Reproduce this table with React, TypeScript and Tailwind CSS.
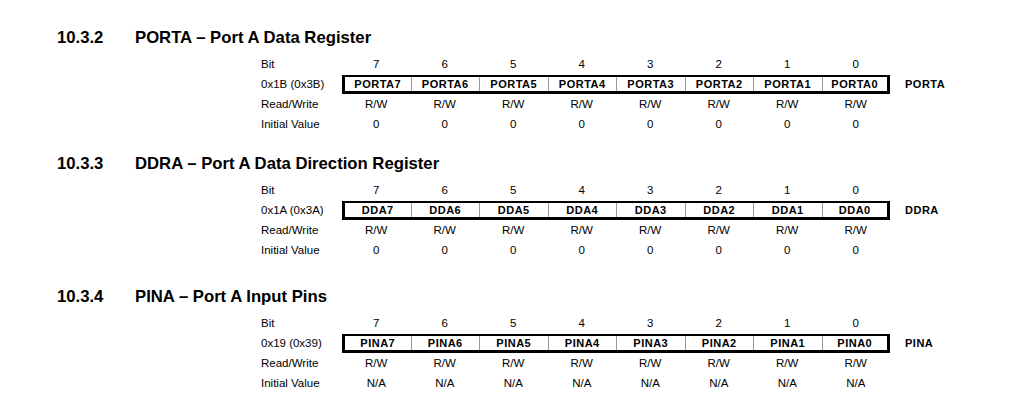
const bits = [7, 6, 5, 4, 3, 2, 1, 0];

type Reg = {
    num: string;
    title: string;
    addr: string;
    name: string;
    prefix: string;
    init: string;
    gap: string;
};

const regs: Reg[] = [
    {num: '10.3.2', title: 'PORTA – Port A Data Register', addr: '0x1B (0x3B)', name: 'PORTA', prefix: 'PORTA', init: '0', gap: 'mt-0'},
    {num: '10.3.3', title: 'DDRA – Port A Data Direction Register', addr: '0x1A (0x3A)', name: 'DDRA', prefix: 'DDA', init: '0', gap: 'mt-[19px]'},
    {num: '10.3.4', title: 'PINA – Port A Input Pins', addr: '0x19 (0x39)', name: 'PINA', prefix: 'PINA', init: 'N/A', gap: 'mt-[26px]'},
];

function Row({label, values}: {label: string; values: string[]}) {
    return (
        <div className="flex h-[20px] items-center text-[11.5px]">
            <div className="w-[81px]">{label}</div>
            {values.map((v, i) => (
                <div key={i} className="w-[68.5px] text-center">{v}</div>
            ))}
        </div>
    );
}

function Register({reg}: {reg: Reg}) {
    return (
        <section className={reg.gap}>
            <h2 className="flex h-[20px] items-center text-[16.7px] font-bold">
                <span className="w-[78px]">{reg.num}</span>
                <span>{reg.title}</span>
            </h2>
            <div className="mt-[7px] ml-[204px]">
                <Row label="Bit" values={bits.map(String)}/>
                <div className="flex h-[20px] items-start text-[11.5px]">
                    <div className="flex h-[19px] w-[81px] items-center">{reg.addr}</div>
                    <div className="flex h-[19px] border-x-[3px] border-t-2 border-b-[3px] border-black text-[11px]">
                        {bits.map((b, i) => (
                            <div
                                key={b}
                                className={`flex items-center justify-center font-bold tracking-[0.5px] ${i === 0 ? 'w-[65.5px]' : i === 7 ? 'w-[65.5px] border-l border-[#999]' : 'w-[68.5px] border-l border-[#999]'}`}
                            >
                                {reg.prefix}{b}
                            </div>
                        ))}
                    </div>
                    <div className="ml-[15px] flex h-[19px] items-center text-[11px] font-bold tracking-[0.5px]">{reg.name}</div>
                </div>
                <Row label="Read/Write" values={bits.map(() => 'R/W')}/>
                <Row label="Initial Value" values={bits.map(() => reg.init)}/>
            </div>
        </section>
    );
}

export default function App() {
    return (
        <div className="min-h-screen bg-white pt-[28px] pl-[57px] text-black" style={{fontFamily: '"Liberation Sans", Arial, sans-serif'}}>
            {regs.map((r) => (
                <Register key={r.num} reg={r}/>
            ))}
        </div>
    );
}
